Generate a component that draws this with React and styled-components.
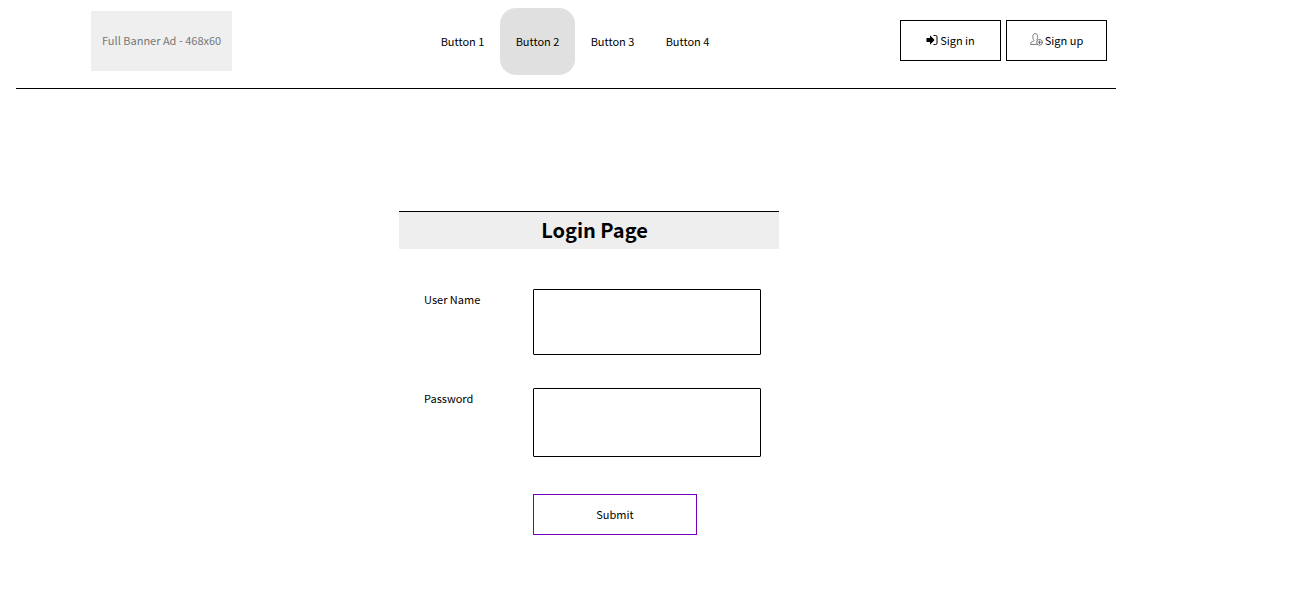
import React from "react";
import styled, { createGlobalStyle } from "styled-components";

const GlobalStyle = createGlobalStyle`
  *, *::before, *::after { box-sizing: border-box; }
  body {
    margin: 0;
    background: #fff;
    color: #000;
    font: 11px/18px "Noto Sans CJK SC", "Noto Sans", sans-serif;
  }
  button, input { font: inherit; color: inherit; }
`;

const Page = styled.div`
  max-width: 1132px;
  padding: 0 16px 32px;
`;

const Header = styled.header`
  display: grid;
  grid-template-columns: 1fr auto 1fr;
  align-items: center;
  padding: 8px 9px 13px 27px;
  border-bottom: 1px solid #000;
`;

const Banner = styled.aside`
  justify-self: start;
  margin: 0 0 1px 48px;
  padding: 20px 11px 22px;
  background: #efefef;
  color: #777;
  white-space: nowrap;
`;

const Nav = styled.nav`
  display: flex;
`;

const NavButton = styled.button`
  width: 75px;
  height: 67px;
  padding: 0 0 2px;
  border: 0;
  border-radius: 16px;
  background: ${({ $active }) => ($active ? "#e0e0e0" : "transparent")};
  cursor: pointer;
`;

const Actions = styled.div`
  display: flex;
  justify-self: end;
  gap: 5px;
  padding-bottom: 2px;
`;

const OutlineButton = styled.button`
  display: flex;
  align-items: center;
  justify-content: center;
  gap: 2px;
  width: ${({ $wide }) => ($wide ? "164px" : "101px")};
  height: 41px;
  padding: 0 0 2px;
  border: 1px solid ${({ $accent }) => ($accent ? "#7400b8" : "#000")};
  background: #fff;
  cursor: pointer;
`;

const Icon = styled.svg`
  flex: none;
`;

const Main = styled.main`
  padding-left: 46px;
`;

const LoginForm = styled.form`
  width: 380px;
  max-width: 100%;
  margin: 122px auto 0;
`;

const Title = styled.h1`
  margin: 0 0 40px;
  padding: 3px 0 4px 11px;
  border-top: 1px solid #000;
  background: #eee;
  font-size: 20px;
  line-height: 30px;
  font-weight: 700;
  text-align: center;
`;

const Fields = styled.div`
  display: grid;
  grid-template-columns: 109px 1fr;
  row-gap: 33px;
  padding: 0 18px 0 25px;
`;

const Label = styled.label`
  padding-top: 1px;
`;

const Input = styled.input`
  width: 100%;
  height: ${({ $tall }) => ($tall ? "69px" : "66px")};
  padding: 8px;
  border: 1px solid #000;
  border-radius: 1px;
  background: #fff;
`;

const Submit = styled.div`
  grid-column: 2;
  padding-top: 4px;
`;

const SignInIcon = () => (
  <Icon width="12" height="12" viewBox="0 0 12 12" aria-hidden="true">
    <path d="M.5 4H4V1.3L8.6 6 4 10.7V8H.5z" fill="#000" />
    <path d="M7.5 1.5h2.2q1.3 0 1.3 1.3v6.4q0 1.3-1.3 1.3H7.5" fill="none" stroke="#000" />
  </Icon>
);

const SignUpIcon = () => (
  <Icon width="13" height="13" viewBox="0 0 13 13" aria-hidden="true">
    <g fill="none" stroke="#555" strokeWidth=".8" strokeLinecap="round" strokeLinejoin="round">
      <path d="M6.5 11.4H.6c0-2 .5-2.4 1.8-2.8C3.6 8.3 4 8.2 4 7.3 3 6.2 2.8 5 2.8 3.5 2.8 1.6 3.7.6 5.2.6s2.5 1 2.5 2.9c0 1.4-.3 2.4-1 3.3" />
      <circle cx="9.5" cy="9.3" r="2.9" />
      <path d="M8.1 9.3h2.8M9.5 7.9v2.8" />
    </g>
  </Icon>
);

export default function App() {
  return (
    <>
      <GlobalStyle />
      <Page>
        <Header>
          <Banner>Full Banner Ad - 468x60</Banner>
          <Nav>
            {[1, 2, 3, 4].map((n) => (
              <NavButton key={n} type="button" $active={n === 2}>
                Button {n}
              </NavButton>
            ))}
          </Nav>
          <Actions>
            <OutlineButton type="button">
              <SignInIcon />
              Sign in
            </OutlineButton>
            <OutlineButton type="button">
              <SignUpIcon />
              Sign up
            </OutlineButton>
          </Actions>
        </Header>
        <Main>
          <LoginForm onSubmit={(e) => e.preventDefault()}>
            <Title>Login Page</Title>
            <Fields>
              <Label htmlFor="username">User Name</Label>
              <Input id="username" name="username" type="text" />
              <Label htmlFor="password">Password</Label>
              <Input id="password" name="password" type="password" $tall />
              <Submit>
                <OutlineButton type="submit" $wide $accent>
                  Submit
                </OutlineButton>
              </Submit>
            </Fields>
          </LoginForm>
        </Main>
      </Page>
    </>
  );
}
